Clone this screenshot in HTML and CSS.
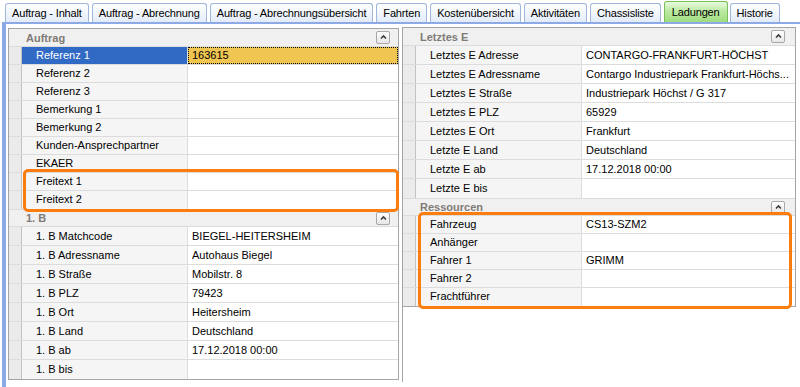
FILE: index.html
```html
<!DOCTYPE html>
<html lang="de">
<head>
    <meta charset="UTF-8">
    <title>Auftrag - Ladungen</title>
    <link rel="stylesheet" href="styles.css">
</head>
<body>
    <div class="tabs">
        <div class="tab">Auftrag - Inhalt</div>
        <div class="tab">Auftrag - Abrechnung</div>
        <div class="tab">Auftrag - Abrechnungsübersicht</div>
        <div class="tab">Fahrten</div>
        <div class="tab">Kostenübersicht</div>
        <div class="tab">Aktivitäten</div>
        <div class="tab">Chassisliste</div>
        <div class="tab active">Ladungen</div>
        <div class="tab">Historie</div>
    </div>

    <div class="page">
        <!-- left property grid -->
        <div class="pane left">
            <div class="grid">
                <div class="cat">
                    <div class="cat-head">
                        <span>Auftrag</span>
                        <button class="collapse"><svg viewBox="0 0 11 11"><polyline points="3,6.5 5.5,4 8,6.5"/></svg></button>
                    </div>
                    <div class="row selected"><div class="gutter"></div><div class="label">Referenz 1</div><div class="value">163615</div></div>
                    <div class="row"><div class="gutter"></div><div class="label">Referenz 2</div><div class="value"></div></div>
                    <div class="row"><div class="gutter"></div><div class="label">Referenz 3</div><div class="value"></div></div>
                    <div class="row"><div class="gutter"></div><div class="label">Bemerkung 1</div><div class="value"></div></div>
                    <div class="row"><div class="gutter"></div><div class="label">Bemerkung 2</div><div class="value"></div></div>
                    <div class="row"><div class="gutter"></div><div class="label">Kunden-Ansprechpartner</div><div class="value"></div></div>
                    <div class="row"><div class="gutter"></div><div class="label">EKAER</div><div class="value"></div></div>
                    <div class="mark">
                        <div class="row"><div class="gutter"></div><div class="label">Freitext 1</div><div class="value"></div></div>
                        <div class="row"><div class="gutter"></div><div class="label">Freitext 2</div><div class="value"></div></div>
                    </div>
                </div>

                <div class="cat tall">
                    <div class="cat-head">
                        <span>1. B</span>
                        <button class="collapse"><svg viewBox="0 0 11 11"><polyline points="3,6.5 5.5,4 8,6.5"/></svg></button>
                    </div>
                    <div class="row"><div class="gutter"></div><div class="label">1. B Matchcode</div><div class="value">BIEGEL-HEITERSHEIM</div></div>
                    <div class="row"><div class="gutter"></div><div class="label">1. B Adressname</div><div class="value">Autohaus Biegel</div></div>
                    <div class="row"><div class="gutter"></div><div class="label">1. B Straße</div><div class="value">Mobilstr. 8</div></div>
                    <div class="row"><div class="gutter"></div><div class="label">1. B PLZ</div><div class="value">79423</div></div>
                    <div class="row"><div class="gutter"></div><div class="label">1. B Ort</div><div class="value">Heitersheim</div></div>
                    <div class="row"><div class="gutter"></div><div class="label">1. B Land</div><div class="value">Deutschland</div></div>
                    <div class="row"><div class="gutter"></div><div class="label">1. B ab</div><div class="value">17.12.2018 00:00</div></div>
                    <div class="row"><div class="gutter"></div><div class="label">1. B bis</div><div class="value"></div></div>
                </div>
            </div>
        </div>

        <!-- right property grid -->
        <div class="pane right">
            <div class="grid">
                <div class="cat tall">
                    <div class="cat-head">
                        <span>Letztes E</span>
                        <button class="collapse"><svg viewBox="0 0 11 11"><polyline points="3,6.5 5.5,4 8,6.5"/></svg></button>
                    </div>
                    <div class="row"><div class="gutter"></div><div class="label">Letztes E Adresse</div><div class="value">CONTARGO-FRANKFURT-HÖCHST</div></div>
                    <div class="row"><div class="gutter"></div><div class="label">Letztes E Adressname</div><div class="value">Contargo Industriepark Frankfurt-Höchs...</div></div>
                    <div class="row"><div class="gutter"></div><div class="label">Letztes E Straße</div><div class="value">Industriepark Höchst / G 317</div></div>
                    <div class="row"><div class="gutter"></div><div class="label">Letztes E PLZ</div><div class="value">65929</div></div>
                    <div class="row"><div class="gutter"></div><div class="label">Letztes E Ort</div><div class="value">Frankfurt</div></div>
                    <div class="row"><div class="gutter"></div><div class="label">Letzte E Land</div><div class="value">Deutschland</div></div>
                    <div class="row"><div class="gutter"></div><div class="label">Letzte E ab</div><div class="value">17.12.2018 00:00</div></div>
                    <div class="row"><div class="gutter"></div><div class="label">Letzte E bis</div><div class="value"></div></div>
                </div>

                <div class="cat">
                    <div class="cat-head">
                        <span>Ressourcen</span>
                        <button class="collapse"><svg viewBox="0 0 11 11"><polyline points="3,6.5 5.5,4 8,6.5"/></svg></button>
                    </div>
                    <div class="mark inset">
                        <div class="row"><div class="gutter"></div><div class="label">Fahrzeug</div><div class="value">CS13-SZM2</div></div>
                        <div class="row"><div class="gutter"></div><div class="label">Anhänger</div><div class="value"></div></div>
                        <div class="row"><div class="gutter"></div><div class="label">Fahrer 1</div><div class="value">GRIMM</div></div>
                        <div class="row"><div class="gutter"></div><div class="label">Fahrer 2</div><div class="value"></div></div>
                        <div class="row"><div class="gutter"></div><div class="label">Frachtführer</div><div class="value"></div></div>
                    </div>
                </div>
            </div>
        </div>
    </div>
</body>
</html>
```

FILE: styles.css
```css
* {
    margin: 0;
    padding: 0;
    box-sizing: border-box;
}

body {
    width: 800px;
    height: 387px;
    overflow: hidden;
    background: #ffffff;
    color: #000000;
    font-family: "Liberation Sans", Arial, sans-serif;
    font-size: 11px;
}

/* tab strip */
.tabs {
    display: flex;
    align-items: flex-end;
    gap: 3px;
    height: 22px;
    padding-left: 5px;
}

.tab {
    height: 19px;
    padding: 0 6px;
    line-height: 18px;
    white-space: nowrap;
    letter-spacing: -0.15px;
    border: 1px solid #9fb5d9;
    border-bottom: none;
    border-radius: 3px 3px 0 0;
    background: linear-gradient(#ffffff, #f3f7fc 45%, #e2ebf8);
}

.tab.active {
    height: 21px;
    line-height: 20px;
    padding: 0 7px;
    margin-right: -1px;
    border-color: #79c05a;
    background: linear-gradient(#eafbe0, #bdeaa2 45%, #9fdc80);
}

/* content area */
.page {
    display: flex;
    gap: 3px;
    height: 365px;
    margin-left: 2px;
    padding: 3px 4px 0 2px;
    border-top: 2px solid #8eaae6;
    border-left: 4px solid #8eaae6;
}

.pane.left {
    width: 391px;
}

.pane.right {
    width: 394px;
    height: 355px;
    border-left: 1px solid #a5a5a5;
}

.grid {
    border: 1px solid #a5a5a5;
}

.pane.left .grid {
    margin-top: 1px;
}

.pane.right .grid {
    border-left: none;
}

/* categories */
.cat {
    --row-h: 18px;
}

.cat.tall {
    --row-h: 19px;
}

.cat-head {
    display: flex;
    align-items: center;
    justify-content: space-between;
    height: 18px;
    padding: 0 8px 0 17px;
    background: #f0f0f0;
    border-bottom: 1px solid #dcdcdc;
    color: #7f7b76;
    font-weight: bold;
}

.pane.right .cat-head {
    padding-right: 10px;
}

.collapse {
    width: 14px;
    height: 13px;
    border: 1px solid #a8a8a8;
    border-radius: 2px;
    background: linear-gradient(#ffffff, #e6e6e6);
    display: flex;
    align-items: center;
    justify-content: center;
}

.collapse svg {
    width: 11px;
    height: 11px;
    fill: none;
    stroke: #3c3c3c;
    stroke-width: 1.6;
}

/* rows */
.row {
    display: grid;
    grid-template-columns: 13px 166px 1fr;
    height: var(--row-h);
    line-height: calc(var(--row-h) - 1px);
    border-bottom: 1px solid #dcdcdc;
}

.row:last-child {
    border-bottom: none;
}

.cat .mark:not(:last-child) .row:last-child {
    border-bottom: 1px solid #dcdcdc;
}

.gutter {
    background: #ebebeb;
    border-right: 1px solid #c2c2c2;
}

.label {
    padding-left: 14px;
    background: #f5f5f5;
    border-right: 1px solid #dcdcdc;
    white-space: nowrap;
    overflow: hidden;
}

.value {
    padding-left: 4px;
    white-space: nowrap;
    overflow: hidden;
}

.row.selected .label {
    background: #316ac5;
    color: #ffffff;
}

.row.selected .value {
    background: #f1c552;
    outline: 1px dotted #000000;
    outline-offset: -1px;
}

.cat + .cat .cat-head {
    border-top: 1px solid #dcdcdc;
}

/* orange highlight frame */
.mark {
    position: relative;
}

.mark::after {
    content: "";
    position: absolute;
    top: -4px;
    bottom: -3px;
    left: 14px;
    right: -1px;
    border: 3px solid #fb7d0e;
    border-radius: 5px;
    pointer-events: none;
}

.mark.inset::after {
    left: 15px;
    right: 3px;
}
```
